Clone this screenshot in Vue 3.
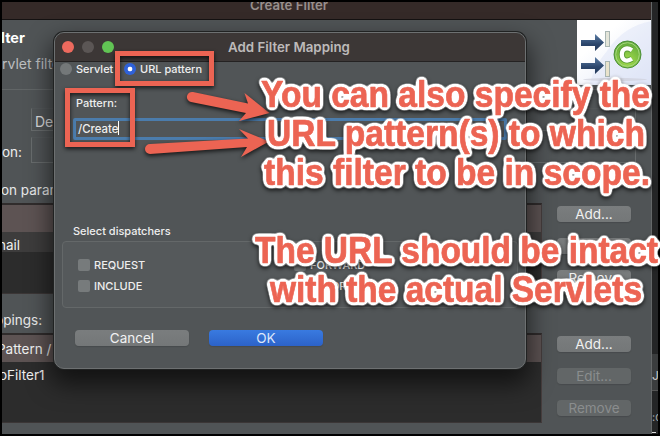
<script setup>
const paramButtons = [
  { label: 'Add...', off: false },
  { label: 'Edit...', off: false },
  { label: 'Remove', off: false },
]
const mappingButtons = [
  { label: 'Add...', off: false },
  { label: 'Edit...', off: true },
  { label: 'Remove', off: true },
]
const dispatchers = ['REQUEST', 'FORWARD', 'INCLUDE', 'ERROR']
const notes = [
  { text: 'You can also specify the', x: 261, y: 107, w: 389 },
  { text: 'URL pattern(s) to which', x: 267, y: 146, w: 378 },
  { text: 'this filter to be in scope.', x: 264, y: 185, w: 386 },
  { text: 'The URL should be intact', x: 255, y: 262.5, w: 403 },
  { text: 'with the actual Servlets', x: 270, y: 301.5, w: 372 },
]
</script>

<template>
  <div class="screen">
    <div class="window">
      <header class="bar">Create Filter</header>
      <section class="banner">
        <div class="heading">
          <h1>lter</h1>
          <p>rvlet filter</p>
        </div>
        <svg class="logo" width="75" height="65" viewBox="0 0 75 65">
          <defs>
            <linearGradient id="bg" x1="0" y1="0" x2="1" y2="1">
              <stop offset="0.3" stop-color="#fff" /><stop offset="1" stop-color="#dfe5f6" />
            </linearGradient>
            <linearGradient id="arrow" x1="0" y1="0" x2="0" y2="1">
              <stop offset="0" stop-color="#5c7da5" /><stop offset="0.6" stop-color="#2b456b" /><stop offset="1" stop-color="#24395a" />
            </linearGradient>
            <radialGradient id="green" cx="0.5" cy="0.75" r="0.7">
              <stop offset="0" stop-color="#a4dc4c" /><stop offset="1" stop-color="#62ab3b" />
            </radialGradient>
          </defs>
          <rect width="75" height="65" fill="url(#bg)" />
          <path d="M30 31C42 13 57 4 75 1V65H12C17 50 21 42 30 31Z" fill="#dce3f6" opacity="0.45" />
          <ellipse cx="38" cy="59.5" rx="32" ry="1.5" fill="#cfd0dc" opacity="0.7" />
          <path d="M4 20H18V14L27 22.500L18 31V26H4Z" fill="url(#arrow)" />
          <path d="M4 43H18V37L27 45.500L18 54V49H4Z" fill="url(#arrow)" />
          <rect x="28.500" y="11.500" width="4" height="15" fill="#e4e5d9" stroke="#a8b5b2" />
          <rect x="28.500" y="41.500" width="4" height="15" fill="#e9e3cc" stroke="#a8b5b2" />
          <circle cx="50.500" cy="34.500" r="13.500" fill="url(#green)" stroke="#4c8f3b" />
          <circle cx="50.500" cy="34.500" r="11.800" fill="none" stroke="#a7d780" stroke-width="1" />
          <path d="M55 30.200C49.500 26.500 44.800 29 44.800 34.500S49.500 42.500 55 38.800" fill="none" stroke="#5a9c35" stroke-width="6" />
          <path d="M55 30.200C49.500 26.500 44.800 29 44.800 34.500S49.500 42.500 55 38.800" fill="none" stroke="#fff" stroke-width="4.200" />
        </svg>
      </section>
      <section class="fields">
        <div class="field"><span></span><div class="well">Demo</div></div>
        <div class="field tall"><span>on:</span><div class="well"></div></div>
      </section>
      <h2 class="label first">on parameters:</h2>
      <section class="group">
        <div class="table params">
          <div class="row selected"></div>
          <div class="row dim">nail</div>
        </div>
        <div class="buttons">
          <button v-for="b in paramButtons" :key="b.label" :class="{ off: b.off }">{{ b.label }}</button>
        </div>
      </section>
      <h2 class="label second">ppings:</h2>
      <section class="group">
        <div class="table mappings">
          <div class="row selected pat">Pattern /</div>
          <div class="row plain">oFilter1</div>
        </div>
        <div class="buttons">
          <button v-for="b in mappingButtons" :key="b.label" :class="{ off: b.off }">{{ b.label }}</button>
        </div>
      </section>
    </div>
    <aside class="behind">
      <div class="tab">JU</div>
      <div class="code">:c</div>
      <div class="dash"></div>
    </aside>

    <div class="dialog">
      <header class="dialog-bar">
        <i class="dot red"></i><i class="dot gray"></i><i class="dot green"></i>
        <strong>Add Filter Mapping</strong>
      </header>
      <div class="radios">
        <i class="radio"></i><span class="servlet">Servlet</span>
        <i class="radio on"></i><span>URL pattern</span>
      </div>
      <div class="pattern-label">Pattern:</div>
      <div class="input"><span>/Create</span></div>
      <div class="select-label">Select dispatchers</div>
      <div class="checks">
        <div v-for="d in dispatchers" :key="d" class="check"><i></i><span>{{ d }}</span></div>
      </div>
      <div class="actions">
        <button>Cancel</button>
        <button class="primary">OK</button>
      </div>
    </div>

    <svg class="notes" width="660" height="436" viewBox="0 0 660 436">
      <defs>
        <filter id="outline" x="240" y="60" width="420" height="270" filterUnits="userSpaceOnUse" color-interpolation-filters="sRGB">
          <feGaussianBlur in="SourceAlpha" stdDeviation="2.2" result="soft" />
          <feComponentTransfer in="soft" result="edge">
            <feFuncR type="linear" slope="0" intercept="1" />
            <feFuncG type="linear" slope="0" intercept="1" />
            <feFuncB type="linear" slope="0" intercept="1" />
            <feFuncA type="linear" slope="13" intercept="-0.3" />
          </feComponentTransfer>
          <feMerge><feMergeNode in="edge" /><feMergeNode in="SourceGraphic" /></feMerge>
        </filter>
      </defs>
      <g class="shade">
        <rect x="117.500" y="53.500" width="94" height="30" class="frame" />
        <rect x="67.500" y="90.500" width="65" height="54" class="frame" />
        <path class="arrow" d="M193 92L248 103.500L244.500 93L269.500 113L239 121L246 113L191 102A5 5 0 0 1 193 92Z" />
        <path class="arrow" d="M150 144L248 138.500L239 129L269 141.500L241 157L247 147L150 154A5 5 0 0 1 150 144Z" />
      </g>
      <g class="shade">
        <g filter="url(#outline)">
          <text v-for="n in notes" :key="n.text" :x="n.x" :y="n.y" :textLength="n.w" lengthAdjust="spacingAndGlyphs">{{ n.text }}</text>
        </g>
      </g>
    </svg>
  </div>
</template>

<style>
body { margin: 0; background: #000; }
</style>

<style scoped>
* { box-sizing: border-box; }
h1, h2, p { margin: 0; font-weight: 400; }
.screen {
  position: relative; display: flex; width: 660px; height: 436px; padding: 2px;
  background: #000; overflow: hidden; color: #eee; font-family: Inter, "Liberation Sans", sans-serif;
}
.window { flex: none; width: 650px; height: 432px; background: #505456; overflow: hidden; border-right: 1px solid #646768; }
.bar {
  height: 18px; background: #352a28; border-bottom: 1px solid #151212; color: #988f8d;
  text-align: center; font-size: 13.200px; font-weight: 600; line-height: 6px; padding-right: 75px;
}
.banner { display: flex; justify-content: space-between; height: 70px; border-bottom: 1px solid #616566; }
.heading { padding-top: 9px; }
.heading h1 { font-size: 14.500px; line-height: 18px; font-weight: 700; color: #fff; text-indent: -1px; }
.heading p { margin-top: 9px; font-size: 14px; line-height: 16px; color: #bcbfc0; white-space: nowrap; }
.logo { display: block; flex: none; margin-right: -1px; }
.fields { padding-top: 18px; height: 80px; }
.field { display: flex; height: 23px; }
.field.tall { margin-top: 6px; height: 26px; }
.field span { width: 29px; font-size: 13.500px; line-height: 30px; }
.well { width: 605px; border: 1px solid #686c6d; border-top-color: #54585a; font-size: 14px; line-height: 26px; padding-left: 3px; color: #ddd; }
.label { font-size: 13.500px; white-space: nowrap; color: #e8e8e8; }
.label.first { height: 33px; line-height: 40px; text-indent: -1px; }
.label.second { height: 39px; line-height: 52px; text-indent: -7px; }
.group { display: flex; gap: 15px; }
.table { width: 540px; background: #2c2c2c; border: 1px solid #3b3636; border-left: 0; border-top: 2px solid #302c2c; border-right-color: #463d3d; }
.params { height: 91px; }
.mappings { height: 90px; }
.row { height: 27px; font-size: 13.500px; line-height: 29px; white-space: nowrap; }
.selected { background: #5d5353; }
.pat { text-indent: -5px; }
.row.dim { height: 20px; background: #3d3c3c; line-height: 26px; text-indent: -4px; }
.row.plain { text-indent: -3px; line-height: 27px; }
.buttons { display: flex; flex-direction: column; gap: 16px; padding-top: 3px; }
button {
  width: 74px; height: 16px; padding: 0; border: 0; border-radius: 4px; font: 400 13.500px/15px Inter, "Liberation Sans", sans-serif;
  color: #f1f1f1; background: linear-gradient(#7a7d7e, #747778); box-shadow: 0 1px 1px #3a3d3f66; overflow: hidden;
}
.buttons button.off { background: #626667; color: #8a8d8e; }
.behind { flex: none; width: 6px; height: 432px; padding-top: 352px; background: #242526; overflow: hidden; }
.tab { height: 37px; background: #3b3d3e; line-height: 43px; font-size: 12px; color: #ccc; border-bottom: 1px solid #555; }
.code { height: 35px; font-size: 11px; line-height: 52px; color: #aaa; }
.dash { width: 4px; height: 1px; background: #ddd; margin-top: 6px; }
.dialog {
  position: absolute; left: 54px; top: 32px; width: 472px; height: 337px; border-radius: 10px; overflow: hidden;
  background: #515557; border: 1px solid #6d7071; box-shadow: 0 0 0 1px #202222, 0 12px 24px 3px #0009;
}
.dialog-bar { display: flex; align-items: center; gap: 8px; height: 29px; padding-left: 7px; background: #3c3736; border-bottom: 1px solid #242222; }
.dot { width: 12px; height: 12px; border-radius: 50%; }
.red { background: #ed6a5e; }
.gray { background: #5b5655; }
.green { background: #61c454; }
.dialog-bar strong { margin-left: 106px; font-size: 13.300px; font-weight: 600; color: #bdbaba; white-space: nowrap; }
.radios { display: flex; align-items: center; height: 14px; padding-left: 5px; font-size: 11px; font-weight: 500; white-space: nowrap; }
.radio { width: 12px; height: 12px; border-radius: 50%; background: #747879; margin-right: 4px; flex: none; }
.servlet { width: 48px; }
.radio.on { background: radial-gradient(circle, #fff 0 2px, #2f62d9 2.700px); }
.pattern-label { height: 42px; padding: 20px 0 0 21px; font-size: 11px; line-height: 15px; font-weight: 500; }
.input { width: 434px; height: 22px; margin-left: 18px; border: 3px solid #4b7cac; border-radius: 2px; padding-left: 2px; font-size: 11.400px; line-height: 16px; font-weight: 500; }
.input span { display: inline-block; height: 14px; border-right: 1px solid #fff; line-height: 16px; }
.select-label { height: 101px; padding: 84px 0 0 18px; font-size: 11px; line-height: 14px; font-weight: 500; }
.checks {
  display: grid; grid-template-columns: 216px 1fr; grid-auto-rows: 21px; width: 456px; height: 67px; margin-left: 7px;
  padding: 12px 0 0 15px; border: 1px solid #646869; border-radius: 4px; background: #55595b; font-size: 11px; font-weight: 500;
}
.check { display: flex; align-items: center; gap: 4px; }
.check i { width: 12px; height: 12px; border-radius: 2px; background: #777b7c; }
.actions { display: flex; gap: 20px; padding: 22px 0 0 20px; }
.actions button { width: 114px; line-height: 15px; }
.actions .primary { background: linear-gradient(#397ae0, #2c62c8); color: #dce6fa; }
.notes { position: absolute; left: 0; top: 0; }
.shade { filter: drop-shadow(0 2px 2px #000b); }
.frame { fill: none; stroke: #ec6453; stroke-width: 5px; }
.arrow { fill: #ec6453; }
.notes text {
  font: 700 36px "Liberation Sans", Arial, sans-serif; fill: #ec6453; stroke: #ec6453; stroke-width: 0.700px;
  stroke-linejoin: round;
}
</style>
